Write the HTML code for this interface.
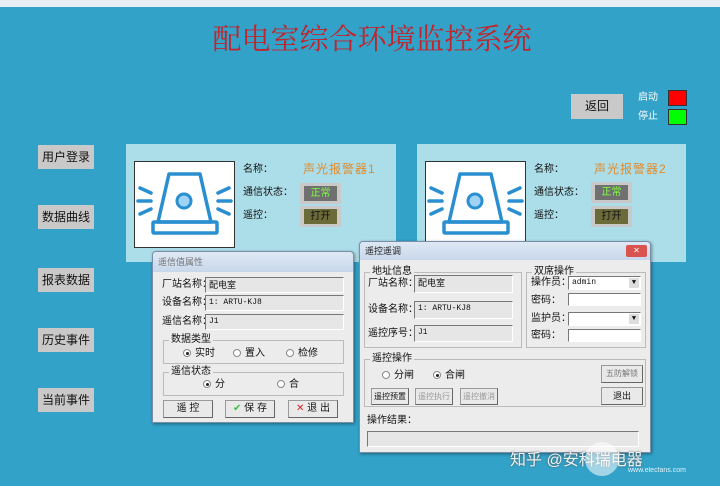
<!DOCTYPE html>
<html><head><meta charset="utf-8"><style>
*{margin:0;padding:0;box-sizing:border-box}
body{width:720px;height:486px;overflow:hidden;background:#32a2c8;position:relative;font-family:"Liberation Sans","Noto Sans CJK SC",sans-serif;font-size:10px;color:#111}
.a{position:absolute;white-space:nowrap}
.btn{position:absolute;background:#c9c9c9;font-size:12px;text-align:center;color:#111}
.panel{position:absolute;background:#acdeea}
.lbl{position:absolute;font-size:10px;color:#111;white-space:nowrap;line-height:12px}
.dlg{position:absolute;background:#ececec;border:1px solid #7a8ea8;box-shadow:1px 1px 3px rgba(0,0,0,.4)}
.tb{position:absolute;left:0;right:0;top:0;background:linear-gradient(#dfe9f5,#c7d7ea);font-size:9px;color:#333;padding-left:5px}
.fld{position:absolute;background:#e6e6e6;border-top:1px solid #777;border-left:1px solid #777;border-bottom:1px solid #fff;border-right:1px solid #fff;font-size:8px;padding-left:3px;line-height:14px;font-family:"Liberation Mono","Noto Sans CJK SC",monospace;white-space:nowrap;overflow:hidden}
.wf{background:#fff}
.grp{position:absolute;border:1px solid #bbb}
.gt{position:absolute;background:#ececec;padding:0 2px;font-size:10px;top:-7px;left:5px;line-height:12px;white-space:nowrap}
.pb{position:absolute;background:#e9e9e9;border:1px solid #999;border-right-color:#666;border-bottom-color:#666;font-size:8px;text-align:center;white-space:nowrap;overflow:hidden}
.rd{display:inline-block;width:8px;height:8px;border:1px solid #888;border-radius:50%;background:#fff;margin-right:4px;vertical-align:middle;position:relative}
.rd.on::after{content:"";position:absolute;left:2px;top:2px;width:3px;height:3px;border-radius:50%;background:#222}
</style></head><body>
<div class="a" style="left:0;top:0;width:720px;height:7px;background:#e8eef3"></div>
<div class="a" style="left:0;top:20px;width:744px;text-align:center;font-size:29px;color:#c0252e;font-family:'Noto Serif CJK SC',serif;line-height:36px">配电室综合环境监控系统</div>
<div class="btn" style="left:571px;top:94px;width:52px;height:25px;line-height:25px">返回</div>
<div class="lbl" style="left:638px;top:92px;color:#fff">启动</div>
<div class="lbl" style="left:638px;top:111px;color:#fff">停止</div>
<div class="a" style="left:668px;top:90px;width:19px;height:16px;background:#f00;border:1px solid #333"></div>
<div class="a" style="left:668px;top:109px;width:19px;height:16px;background:#0f0;border:1px solid #333"></div>

<div class="btn" style="left:38px;top:145px;width:56px;height:24px;line-height:24px">用户登录</div>
<div class="btn" style="left:38px;top:205px;width:56px;height:24px;line-height:24px">数据曲线</div>
<div class="btn" style="left:38px;top:268px;width:56px;height:24px;line-height:24px">报表数据</div>
<div class="btn" style="left:38px;top:328px;width:56px;height:24px;line-height:24px">历史事件</div>
<div class="btn" style="left:38px;top:388px;width:56px;height:24px;line-height:24px">当前事件</div>

<div class="panel" style="left:126px;top:144px;width:270px;height:118px"></div>
<div class="panel" style="left:417px;top:144px;width:269px;height:118px"></div>
<svg class="a" style="left:134px;top:161px" width="101" height="87" viewBox="0 0 101 87">
<rect x="0.5" y="0.5" width="100" height="86" fill="#fff" stroke="#333"/>
<g fill="none" stroke="#2a8fd0" stroke-width="3.5" stroke-linecap="round" stroke-linejoin="round">
<path d="M35 13 H66 L77 61 H24 Z"/>
<rect x="19" y="61" width="64" height="11" rx="1"/>
<path d="M6 27 L17 32 M4 40 H17 M6 53 L17 48 M95 27 L84 32 M97 40 H84 M95 53 L84 48"/>
</g>
<circle cx="50" cy="40" r="7" fill="#9fd3f5" stroke="#2a8fd0" stroke-width="3"/>
</svg>
<svg class="a" style="left:425px;top:161px" width="101" height="87" viewBox="0 0 101 87">
<rect x="0.5" y="0.5" width="100" height="86" fill="#fff" stroke="#333"/>
<g fill="none" stroke="#2a8fd0" stroke-width="3.5" stroke-linecap="round" stroke-linejoin="round">
<path d="M35 13 H66 L77 61 H24 Z"/>
<rect x="19" y="61" width="64" height="11" rx="1"/>
<path d="M6 27 L17 32 M4 40 H17 M6 53 L17 48 M95 27 L84 32 M97 40 H84 M95 53 L84 48"/>
</g>
<circle cx="50" cy="40" r="7" fill="#9fd3f5" stroke="#2a8fd0" stroke-width="3"/>
</svg>
<div class="lbl" style="left:243px;top:164px">名称：</div>
<div class="lbl" style="left:303px;top:162px;color:#e08a2a;font-size:12px;line-height:14px;letter-spacing:1px">声光报警器1</div>
<div class="lbl" style="left:243px;top:187px">通信状态：</div>
<div class="lbl" style="left:243px;top:210px">遥控：</div>
<div class="a" style="left:300px;top:183px;width:41px;height:21px;background:#c9c9c9"></div>
<div class="a" style="left:304px;top:186px;width:33px;height:15px;background:#707070;color:#7fff3f;font-size:10px;text-align:center;line-height:15px">正常</div>
<div class="a" style="left:300px;top:206px;width:41px;height:21px;background:#c9c9c9"></div>
<div class="a" style="left:304px;top:209px;width:33px;height:15px;background:#6b6b3a;color:#111;font-size:10px;text-align:center;line-height:15px">打开</div>

<div class="lbl" style="left:534px;top:164px">名称：</div>
<div class="lbl" style="left:594px;top:162px;color:#e08a2a;font-size:12px;line-height:14px;letter-spacing:1px">声光报警器2</div>
<div class="lbl" style="left:534px;top:187px">通信状态：</div>
<div class="lbl" style="left:534px;top:210px">遥控：</div>
<div class="a" style="left:591px;top:182px;width:41px;height:21px;background:#c9c9c9"></div>
<div class="a" style="left:595px;top:185px;width:33px;height:15px;background:#707070;color:#7fff3f;font-size:10px;text-align:center;line-height:15px">正常</div>
<div class="a" style="left:591px;top:206px;width:41px;height:21px;background:#c9c9c9"></div>
<div class="a" style="left:595px;top:209px;width:33px;height:15px;background:#6b6b3a;color:#111;font-size:10px;text-align:center;line-height:15px">打开</div>

<div class="dlg" style="left:152px;top:251px;width:202px;height:172px;border-radius:4px 4px 0 0">
<div class="tb" style="height:20px;line-height:20px;color:#777;border-radius:4px 4px 0 0">遥信值属性</div>
<div class="lbl" style="left:9px;top:27px">厂站名称：</div><div class="fld" style="left:52px;top:25px;width:139px;height:16px;font-family:'Noto Sans CJK SC';font-size:9px">配电室</div>
<div class="lbl" style="left:9px;top:45px">设备名称：</div><div class="fld" style="left:52px;top:43px;width:139px;height:16px">1: ARTU-KJ8</div>
<div class="lbl" style="left:9px;top:64px">遥信名称：</div><div class="fld" style="left:52px;top:62px;width:139px;height:16px">J1</div>
<div class="grp" style="left:10px;top:88px;width:181px;height:24px"><div class="gt">数据类型</div></div>
<div class="lbl" style="left:30px;top:96px"><span class="rd on"></span>实时</div>
<div class="lbl" style="left:80px;top:96px"><span class="rd"></span>置入</div>
<div class="lbl" style="left:133px;top:96px"><span class="rd"></span>检修</div>
<div class="grp" style="left:10px;top:120px;width:181px;height:24px"><div class="gt">遥信状态</div></div>
<div class="lbl" style="left:50px;top:127px"><span class="rd on"></span>分</div>
<div class="lbl" style="left:124px;top:127px"><span class="rd"></span>合</div>
<div class="pb" style="left:10px;top:148px;width:50px;height:18px;line-height:16px;font-size:10px">遥 控</div>
<div class="pb" style="left:72px;top:148px;width:50px;height:18px;line-height:16px;font-size:10px"><span style="color:#3fbf3f">✔</span> 保 存</div>
<div class="pb" style="left:135px;top:148px;width:50px;height:18px;line-height:16px;font-size:10px"><span style="color:#e02020">✕</span> 退 出</div>
</div>

<div class="dlg" style="left:359px;top:241px;width:292px;height:212px;border-radius:4px 4px 0 0">
<div class="tb" style="height:18px;line-height:18px;color:#222;border-radius:4px 4px 0 0">遥控遥调</div>
<div class="a" style="left:266px;top:3px;width:21px;height:12px;background:#d9534f;border-radius:2px;color:#fff;font-size:8px;text-align:center;line-height:12px">✕</div>
<div class="grp" style="left:4px;top:30px;width:158px;height:76px"><div class="gt">地址信息</div></div>
<div class="lbl" style="left:8px;top:36px">厂站名称：</div><div class="fld" style="left:54px;top:33px;width:99px;height:18px;font-family:'Noto Sans CJK SC';font-size:9px">配电室</div>
<div class="lbl" style="left:8px;top:62px">设备名称：</div><div class="fld" style="left:54px;top:59px;width:99px;height:18px">1: ARTU-KJ8</div>
<div class="lbl" style="left:8px;top:86px">遥控序号：</div><div class="fld" style="left:54px;top:83px;width:99px;height:17px">J1</div>
<div class="grp" style="left:166px;top:30px;width:120px;height:76px"><div class="gt">双席操作</div></div>
<div class="lbl" style="left:171px;top:35px">操作员：</div><div class="fld wf" style="left:208px;top:34px;width:73px;height:14px;line-height:12px">admin<span style="position:absolute;right:1px;top:1px;width:10px;height:10px;background:#ddd;font-size:7px;text-align:center;line-height:10px">▼</span></div>
<div class="lbl" style="left:171px;top:53px">密码：</div><div class="fld wf" style="left:208px;top:51px;width:73px;height:13px"></div>
<div class="lbl" style="left:171px;top:71px">监护员：</div><div class="fld wf" style="left:208px;top:70px;width:73px;height:14px;line-height:12px"><span style="position:absolute;right:1px;top:1px;width:10px;height:10px;background:#ddd;font-size:7px;text-align:center;line-height:10px">▼</span></div>
<div class="lbl" style="left:171px;top:88px">密码：</div><div class="fld wf" style="left:208px;top:87px;width:73px;height:13px"></div>
<div class="grp" style="left:4px;top:117px;width:282px;height:48px"><div class="gt">遥控操作</div></div>
<div class="lbl" style="left:22px;top:128px"><span class="rd"></span>分闸</div>
<div class="lbl" style="left:73px;top:128px"><span class="rd on"></span>合闸</div>
<div class="pb" style="left:241px;top:123px;width:42px;height:18px;line-height:16px;color:#777">五防解锁</div>
<div class="pb" style="left:11px;top:146px;width:38px;height:17px;line-height:15px">遥控预置</div>
<div class="pb" style="left:55px;top:146px;width:38px;height:17px;line-height:15px;color:#999">遥控执行</div>
<div class="pb" style="left:100px;top:146px;width:38px;height:17px;line-height:15px;color:#999">遥控撤消</div>
<div class="pb" style="left:241px;top:145px;width:42px;height:18px;line-height:16px;font-size:9px">退出</div>
<div class="lbl" style="left:7px;top:173px">操作结果：</div>
<div class="fld" style="left:7px;top:189px;width:272px;height:16px"></div>
</div>

<div class="a" style="left:510px;top:446px;color:rgba(255,255,255,.9);font-size:16px;text-shadow:0 0 2px #555">知乎 @安科瑞电器</div>
<div class="a" style="left:585px;top:442px;width:34px;height:34px;border-radius:50%;background:rgba(255,255,255,.55)"></div>
<div class="a" style="left:628px;top:467px;color:#fff;font-size:7px;opacity:.85">www.elecfans.com</div>
</body></html>
